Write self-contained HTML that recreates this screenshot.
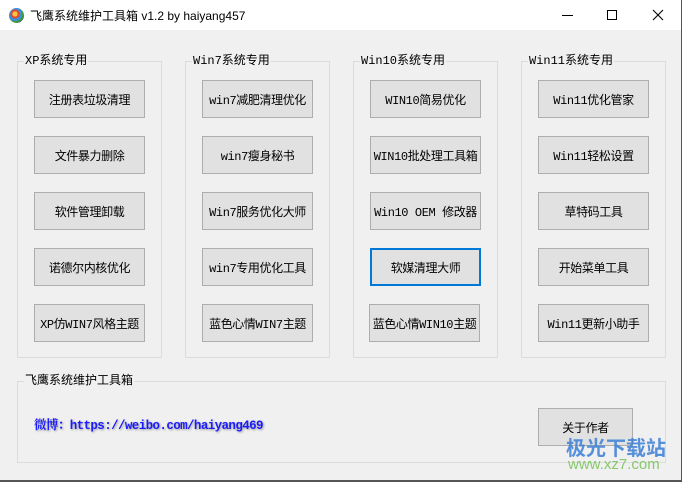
<!DOCTYPE html>
<html><head><meta charset="utf-8"><style>
*{margin:0;padding:0;box-sizing:border-box}
body{width:682px;height:482px;overflow:hidden;background:#f0f0f0;position:relative;font-family:"Liberation Sans","Noto Sans CJK SC",sans-serif;font-size:12px;color:#000}
.title{position:absolute;left:0;top:0;width:682px;height:30px;background:#fff}
.ttxt{position:absolute;left:30px;top:7px;font-size:12px;color:#000}
.icon{position:absolute;left:9px;top:8px;width:15px;height:15px;border-radius:50%;background:radial-gradient(circle at 40% 40%,#f6c445 0 20%,#e04a2a 21% 35%,#3a8de0 36% 55%,#3d9b3a 56% 70%,#354a70 71%)}
.grp{position:absolute;border:1px solid #dcdcdc}
.lg{position:absolute;top:-8px;left:6px;background:#f0f0f0;padding:0 1px;font-size:12px;line-height:14px;font-family:"Liberation Mono","Noto Sans CJK SC",sans-serif}
.btn{position:absolute;width:111px;height:38px;background:#e1e1e1;border:1px solid #adadad;display:flex;align-items:center;justify-content:center;font-size:12px;font-family:"Liberation Mono","Noto Sans CJK SC",sans-serif;white-space:nowrap;letter-spacing:-0.4px}
.act{border:2px solid #0078d7}
.link{position:absolute;left:34px;top:415px;color:#1a1aff;font-weight:bold;font-family:"Liberation Mono","Noto Serif CJK SC",serif;font-size:12.5px;letter-spacing:-0.6px;text-shadow:1px 1px 2px #999}
</style></head><body>
<div class="title"><div class="icon"></div><div class="ttxt">飞鹰系统维护工具箱 v1.2 by haiyang457</div>
<div style="position:absolute;left:562px;top:15px;width:11px;height:1px;background:#000"></div>
<div style="position:absolute;left:607px;top:10px;width:10px;height:10px;border:1px solid #000"></div>
<svg style="position:absolute;left:652px;top:9px" width="12" height="12"><path d="M1 1L11 11M11 1L1 11" stroke="#000" stroke-width="1.1"/></svg>
</div>
<div style="position:absolute;right:0;top:0;width:1px;height:482px;background:#555"></div>
<div style="position:absolute;left:0;bottom:0;width:682px;height:2px;background:#555"></div>

<div class="grp" style="left:17px;top:61px;width:145px;height:297px"><div class="lg">XP系统专用</div></div>
<div class="grp" style="left:185px;top:61px;width:145px;height:297px"><div class="lg">Win7系统专用</div></div>
<div class="grp" style="left:353px;top:61px;width:145px;height:297px"><div class="lg">Win10系统专用</div></div>
<div class="grp" style="left:521px;top:61px;width:145px;height:297px"><div class="lg">Win11系统专用</div></div>
<div class="grp" style="left:17px;top:381px;width:649px;height:82px"><div class="lg">飞鹰系统维护工具箱</div></div>

<div class="btn" style="left:34px;top:80px">注册表垃圾清理</div>
<div class="btn" style="left:34px;top:136px">文件暴力删除</div>
<div class="btn" style="left:34px;top:192px">软件管理卸载</div>
<div class="btn" style="left:34px;top:248px">诺德尔内核优化</div>
<div class="btn" style="left:34px;top:304px">XP仿WIN7风格主题</div>

<div class="btn" style="left:202px;top:80px">win7减肥清理优化</div>
<div class="btn" style="left:202px;top:136px">win7瘦身秘书</div>
<div class="btn" style="left:202px;top:192px">Win7服务优化大师</div>
<div class="btn" style="left:202px;top:248px">win7专用优化工具</div>
<div class="btn" style="left:202px;top:304px">蓝色心情WIN7主题</div>

<div class="btn" style="left:370px;top:80px">WIN10简易优化</div>
<div class="btn" style="left:370px;top:136px">WIN10批处理工具箱</div>
<div class="btn" style="left:370px;top:192px">Win10 OEM 修改器</div>
<div class="btn act" style="left:370px;top:248px">软媒清理大师</div>
<div class="btn" style="left:369px;top:304px">蓝色心情WIN10主题</div>

<div class="btn" style="left:538px;top:80px">Win11优化管家</div>
<div class="btn" style="left:538px;top:136px">Win11轻松设置</div>
<div class="btn" style="left:538px;top:192px">草特码工具</div>
<div class="btn" style="left:538px;top:248px">开始菜单工具</div>
<div class="btn" style="left:538px;top:304px">Win11更新小助手</div>

<div class="link">微博：https://weibo.com/haiyang469</div>
<div class="btn" style="left:538px;top:408px;width:95px;height:38px">关于作者</div>
<div style="position:absolute;left:566px;top:432px;color:#3a7fd5;font-weight:bold;font-size:20px;font-family:'Noto Sans CJK SC',sans-serif;opacity:.85">极光下载站</div>
<div style="position:absolute;left:568px;top:456px;color:#6cbf4a;font-size:15px;opacity:.8">www.xz7.com</div>
</body></html>
